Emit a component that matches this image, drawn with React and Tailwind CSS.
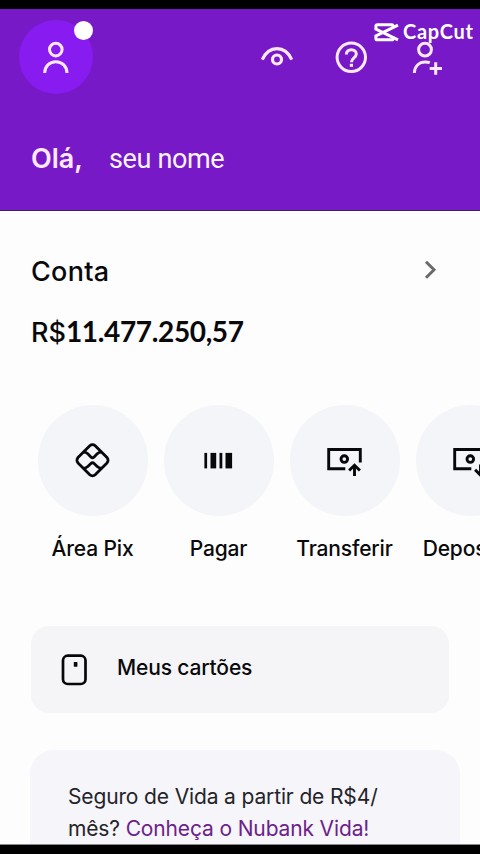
import React from 'react';

const PersonIcon = () => (
    <svg width="40" height="40" viewBox="0 0 40 40" fill="none" stroke="#ffe9ff" strokeWidth="3">
        <circle cx="19.800" cy="12.600" r="6.300" />
        <path d="M8.700 36c0-6.500 4.800-11.300 11.100-11.300S31 29.500 31 36" />
    </svg>
);

const EyeIcon = () => (
    <svg width="40" height="40" viewBox="0 0 40 40" fill="none" stroke="#ffe9ff" strokeWidth="3.200">
        <path d="M5.300 22.600C8.500 15.500 14 11.600 20 11.600s11.500 3.900 14.700 11" />
        <circle cx="20" cy="22.500" r="4.500" />
    </svg>
);

const HelpIcon = () => (
    <svg width="40" height="40" viewBox="0 0 40 40" fill="none" stroke="#ffe9ff" strokeWidth="3">
        <circle cx="20.300" cy="20.300" r="14.200" />
        <path d="M15.400 17.400c0-2.900 2.200-4.700 5-4.700s4.900 1.700 4.900 4.300c0 3.900-4.900 3.800-4.900 8.200" />
        <path d="M20.400 26.800v3" strokeWidth="3.200" />
    </svg>
);

const InviteIcon = () => (
    <svg width="40" height="40" viewBox="0 0 40 40" fill="none" stroke="#ffe9ff" strokeWidth="3">
        <circle cx="18" cy="12.600" r="6.400" />
        <path d="M7.300 36c.4-6.800 4.700-11 11-11 1.600 0 3.100.2 4.500.7" />
        <path d="M28.700 25.200v12.500M22.700 31.400h12.300" />
    </svg>
);

const PixIcon = () => (
    <svg width="40" height="40" viewBox="0 0 40 40" fill="none" stroke="#08080a" strokeWidth="2.800" strokeLinejoin="round">
        <path d="M16.800 4.700a4 4 0 0 1 5.400 0L34 16.500a4 4 0 0 1 0 5.400L22.200 33.700a4 4 0 0 1-5.400 0L5 21.900a4 4 0 0 1 0-5.400z" />
        <path d="M10.500 11.100c2 0 3.200.6 4.300 1.700l3.100 3.100a2.300 2.300 0 0 0 3.200 0l3.100-3.100c1.100-1.100 2.300-1.700 4.300-1.700" />
        <path d="M10.500 27.300c2 0 3.200-.6 4.300-1.700l3.100-3.100a2.300 2.300 0 0 1 3.200 0l3.100 3.100c1.100 1.100 2.300 1.700 4.300 1.700" />
    </svg>
);

const BarcodeIcon = () => (
    <svg width="40" height="40" viewBox="0 0 40 40" fill="#08080a">
        <rect x="5.400" y="11.900" width="2.700" height="15.500" />
        <rect x="11.500" y="11.900" width="5.700" height="15.500" />
        <rect x="20.500" y="11.900" width="2.800" height="15.500" />
        <rect x="26.500" y="11.900" width="6.600" height="15.500" />
    </svg>
);

const TransferIcon = () => (
    <svg width="40" height="40" viewBox="0 0 40 40" fill="none" stroke="#08080a" strokeWidth="2.900">
        <path d="M20.300 27.800H3.700V8.500h31.600v13" />
        <circle cx="19.300" cy="18.100" r="3.300" />
        <path d="M29.500 35V24.500M24.100 29.500l5.400-5.300 5.400 5.300" />
    </svg>
);

const DepositIcon = () => (
    <svg width="40" height="40" viewBox="0 0 40 40" fill="none" stroke="#08080a" strokeWidth="2.900">
        <path d="M20.300 27.800H3.700V8.500h31.600v13" />
        <circle cx="19.300" cy="18.100" r="3.300" />
        <path d="M29.500 23.500V34M24.100 28.800l5.400 5.300 5.400-5.300" />
    </svg>
);

const CardIcon = () => (
    <svg width="26" height="32" viewBox="0 0 26 32" fill="none">
        <rect x="2" y="1.700" width="22.500" height="28.300" rx="4.800" stroke="#08080a" strokeWidth="2.700" />
        <rect x="12.800" y="8" width="3.600" height="4.700" rx="0.500" fill="#08080a" />
    </svg>
);

const CapCutLogo = () => (
    <svg width="25" height="20" viewBox="0 0 25 20" fill="none" stroke="#ffffff" strokeWidth="3">
        <path d="M24 3.200L1.900 14v2.400c0 .9.500 1.400 1.400 1.400h14.300c.9 0 1.500-.5 1.500-1.400v-1.800" />
        <path d="M24 17.800L1.900 7V4.200c0-.9.500-1.400 1.400-1.400h14.300c.9 0 1.500.5 1.500 1.400V6" />
    </svg>
);

const actions = [
    { label: 'Área Pix', icon: <PixIcon /> },
    { label: 'Pagar', icon: <BarcodeIcon /> },
    { label: 'Transferir', icon: <TransferIcon /> },
    { label: 'Depositar', icon: <DepositIcon /> },
];

const App = () => {
    return (
        <div className="relative flex h-[854px] w-[480px] flex-col overflow-hidden bg-[#fdfdfd] font-['Inter',sans-serif] text-[#09090b]">
            <div className="h-[9px] shrink-0 bg-black" />

            {/* header */}
            <header className="h-[202px] shrink-0 border-b border-[#43205f] bg-[#7719c7] pt-[11px]">
                <div className="flex h-[74px] items-center pl-[19px]">
                    <div className="relative flex size-[74px] items-center justify-center rounded-full bg-[#871bf0]">
                        <PersonIcon />
                        <span className="absolute top-[1px] right-0 size-[19px] rounded-full bg-white" />
                    </div>
                    <nav className="ml-[164px] flex items-center">
                        <EyeIcon />
                        <span className="ml-[34px]"><HelpIcon /></span>
                        <span className="ml-[36px]"><InviteIcon /></span>
                    </nav>
                </div>
                <div className="mt-[49px] flex h-[32px] items-center pl-[31px] leading-[32px]">
                    <span className="w-[78px] text-[27px] font-semibold text-[#ffe9ff]">Olá,</span>
                    <span className="font-['Roboto',sans-serif] text-[27px] tracking-[-0.35px] text-[#fdf3ff]">seu nome</span>
                </div>
            </header>

            <main className="flex min-h-0 grow flex-col overflow-hidden">
                {/* account */}
                <section className="pt-[44px] pr-[42px] pl-[31px]">
                    <div className="flex h-[32px] items-center justify-between">
                        <h2 className="pt-[2px] text-[27px] leading-[32px] font-medium tracking-[0.3px]">Conta</h2>
                        <svg width="16" height="22" viewBox="0 0 16 22" fill="none" stroke="#6a6a6e" strokeWidth="3">
                            <path d="M4 1.800l8 8-8 8" />
                        </svg>
                    </div>
                    <p className="mt-[28px] flex h-[32px] items-center leading-[32px]">
                        <span className="pt-[4px] text-[27px] font-medium">R$</span>
                        <span className="pb-[1px] font-['Lato',sans-serif] text-[28px] font-bold tracking-[-0.350px]">11.477.250,57</span>
                    </p>
                </section>

                {/* shortcuts */}
                <section className="mt-[58px] flex gap-[16px] pl-[38px]">
                    {actions.map((action) => (
                        <div key={action.label} className="flex w-[110px] shrink-0 flex-col items-center">
                            <div className="flex h-[111px] w-[110px] items-center justify-center rounded-full bg-[#f4f5f8]">
                                {action.icon}
                            </div>
                            <span className="mt-[19px] pr-[1px] text-[21px] leading-[28px] font-medium tracking-[-0.15px] whitespace-nowrap">{action.label}</span>
                        </div>
                    ))}
                </section>

                {/* cards */}
                <div className="mt-[63px] ml-[31px] flex h-[87px] w-[418px] shrink-0 items-center rounded-[18px] bg-[#f5f5f8] pl-[30px]">
                    <CardIcon />
                    <span className="ml-[30px] pb-[4px] text-[21px] font-medium tracking-[-0.15px]">Meus cartões</span>
                </div>

                {/* insurance */}
                <div className="mt-[37px] ml-[30px] h-[120px] w-[430px] shrink-0 rounded-[24px] bg-[#f6f5f9] pt-[31px] pl-[38px] text-[21px] leading-[32px] tracking-[-0.14px] whitespace-nowrap text-[#242428]">
                    <p>Seguro de Vida a partir de R$4/</p>
                    <p>mês? <span className="text-[#6b2389]">Conheça o Nubank Vida!</span></p>
                </div>
            </main>

            <div className="h-[10px] shrink-0 border-t border-[#8a8a8a] bg-black" />

            {/* watermark */}
            <div className="absolute top-[22px] left-[374px] flex h-[20px] items-center gap-[4px] text-white">
                <CapCutLogo />
                <span className="pb-[2px] font-['Lato',sans-serif] text-[20px] leading-[20px] font-bold tracking-[0.7px]">CapCut</span>
            </div>
        </div>
    );
};

export default App;
